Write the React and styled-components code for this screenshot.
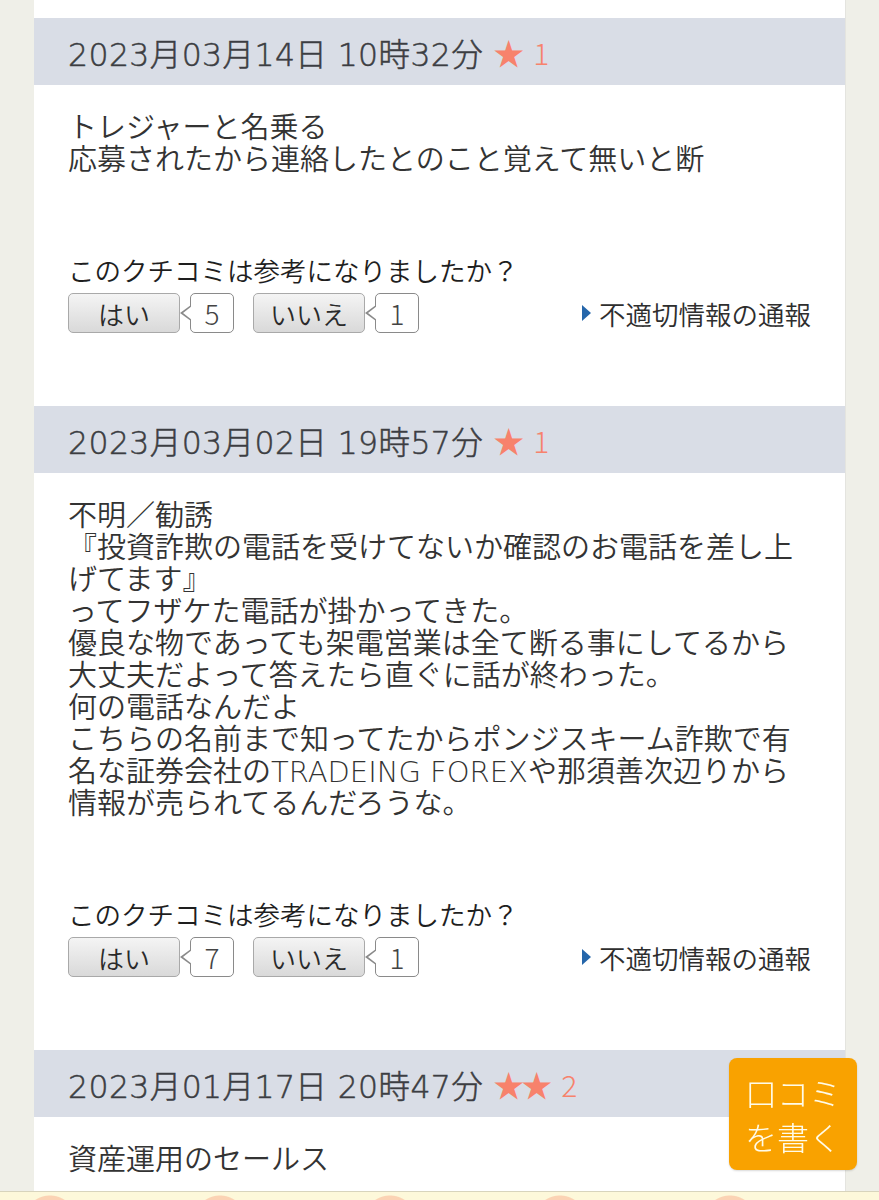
import React from 'react'
import styled, { createGlobalStyle } from 'styled-components'

const reviews = [
  {
    date: '2023月03月14日 10時32分',
    stars: 1,
    lines: ['トレジャーと名乗る', '応募されたから連絡したとのこと覚えて無いと断'],
    yes: 5,
    no: 1,
  },
  {
    date: '2023月03月02日 19時57分',
    stars: 1,
    lines: [
      '不明／勧誘',
      '『投資詐欺の電話を受けてないか確認のお電話を差し上げてます』',
      'ってフザケた電話が掛かってきた。',
      '優良な物であっても架電営業は全て断る事にしてるから大丈夫だよって答えたら直ぐに話が終わった。',
      '何の電話なんだよ',
      'こちらの名前まで知ってたからポンジスキーム詐欺で有名な証券会社のTRADEING FOREXや那須善次辺りから情報が売られてるんだろうな。',
    ],
    yes: 7,
    no: 1,
  },
  {
    date: '2023月01月17日 20時47分',
    stars: 2,
    lines: ['資産運用のセールス'],
  },
]

const Global = createGlobalStyle`
  html, body {
    margin: 0;
    padding: 0;
    background: #efefe8;
  }
  body {
    font-family: "Noto Sans CJK JP", "Noto Sans", sans-serif;
    color: #3a3a3a;
  }
`

const Page = styled.div`
  padding-left: 34px;
  min-height: 1200px;
`

const Card = styled.main`
  width: 812px;
  background: #fff;
  padding-top: 18px;
  border-right: 1px solid #e4e4df;
  box-sizing: border-box;
`

const Header = styled.h2`
  margin: 0;
  height: 67px;
  display: flex;
  align-items: center;
  padding-left: 34px;
  background: #d9dde6;
  font-family: "DejaVu Sans", "Noto Sans CJK JP", sans-serif;
  font-weight: 300;
  font-size: 31.5px;
  letter-spacing: 0.4px;
  color: #3c3d42;
  -webkit-text-stroke: 0.5px #3c3d42;
`

const Rating = styled.span`
  display: flex;
  align-items: center;
  color: #f7826c;
  margin-left: 10px;
  font-family: "Noto Sans CJK JP", sans-serif;
  -webkit-text-stroke: 0;
  .stars {
    font-size: 31px;
    letter-spacing: -3px;
  }
  .num {
    margin-left: 12px;
    font-size: 30px;
    font-weight: 300;
  }
`

const Body = styled.div`
  padding: 27px 34px 73px;
`

const Text = styled.p`
  margin: 0;
  font-family: "DejaVu Sans", "Noto Sans CJK JP", sans-serif;
  font-size: 29px;
  font-weight: 350;
  line-height: 32px;
  color: #333;
`

const Helpful = styled.div`
  margin-top: 78px;
`

const Question = styled.div`
  font-size: 26.5px;
  font-weight: 350;
  line-height: 32px;
  color: #1e1e1e;
`

const VoteRow = styled.div`
  margin-top: 7px;
  display: flex;
  align-items: center;
`

const VoteButton = styled.button`
  width: 112px;
  height: 40px;
  padding: 0;
  border: 1px solid #a9a9a9;
  border-radius: 5px;
  background: linear-gradient(#f4f4f4, #d9d9d9);
  font-family: "Noto Sans CJK JP", sans-serif;
  font-size: 26px;
  font-weight: 350;
  color: #2a2a2a;
  box-sizing: border-box;
`

const Count = styled.span`
  position: relative;
  margin-left: 10px;
  margin-right: ${(p) => (p.$last ? 0 : 19)}px;
  width: 44px;
  height: 40px;
  box-sizing: border-box;
  border: 1.5px solid #8a8a8a;
  border-radius: 5px;
  background: #fff;
  display: flex;
  align-items: center;
  justify-content: center;
  font-size: 28px;
  font-weight: 300;
  color: #444;
  &::before,
  &::after {
    content: '';
    position: absolute;
    top: 50%;
    transform: translateY(-50%);
    border-style: solid;
    border-color: transparent;
  }
  &::before {
    left: -11px;
    border-width: 8px 11px 8px 0;
    border-right-color: #8a8a8a;
  }
  &::after {
    left: -8.5px;
    border-width: 7px 9.5px 7px 0;
    border-right-color: #fff;
  }
`

const Report = styled.a`
  margin-left: auto;
  display: flex;
  align-items: center;
  font-size: 26.5px;
  font-weight: 350;
  color: #2e2e2e;
  text-decoration: none;
  &::before {
    content: '';
    margin-right: 8px;
    border-style: solid;
    border-width: 8px 0 8px 9px;
    border-color: transparent transparent transparent #2566aa;
  }
`

const WriteButton = styled.a`
  position: fixed;
  right: 22px;
  bottom: 30px;
  width: 128px;
  height: 112px;
  border-radius: 8px;
  background: #f9a200;
  box-shadow: 0 1px 2px rgba(0, 0, 0, 0.15);
  display: flex;
  flex-direction: column;
  align-items: center;
  justify-content: center;
  color: #fffbe8;
  font-size: 32px;
  font-weight: 300;
  line-height: 44px;
  text-decoration: none;
`

const BottomBar = styled.div`
  position: fixed;
  left: 0;
  right: 0;
  bottom: 0;
  height: 8px;
  border-top: 1px solid #d8d4bc;
  background:
    radial-gradient(circle at 50px 30px, #fbd3b4 26px, transparent 27px) 0 0 / 170px 40px repeat-x,
    radial-gradient(circle at 165px 34px, #e7efc4 22px, transparent 23px) 0 0 / 340px 40px repeat-x,
    #fdf8da;
`

const Review = ({ r }) => (
  <section>
    <Header>
      {r.date}
      <Rating>
        <span className="stars">{'★'.repeat(r.stars)}</span>
        <span className="num">{r.stars}</span>
      </Rating>
    </Header>
    <Body>
      {r.lines.map((l, i) => (
        <Text key={i}>{l}</Text>
      ))}
      {r.yes !== undefined && (
        <Helpful>
          <Question>このクチコミは参考になりましたか？</Question>
          <VoteRow>
            <VoteButton>はい</VoteButton>
            <Count>{r.yes}</Count>
            <VoteButton>いいえ</VoteButton>
            <Count $last>{r.no}</Count>
            <Report href="#">不適切情報の通報</Report>
          </VoteRow>
        </Helpful>
      )}
    </Body>
  </section>
)

export default function App() {
  return (
    <>
      <Global />
      <Page>
        <Card>
          {reviews.map((r, i) => (
            <Review key={i} r={r} />
          ))}
        </Card>
      </Page>
      <WriteButton href="#">
        <span>口コミ</span>
        <span>を書く</span>
      </WriteButton>
      <BottomBar />
    </>
  )
}
